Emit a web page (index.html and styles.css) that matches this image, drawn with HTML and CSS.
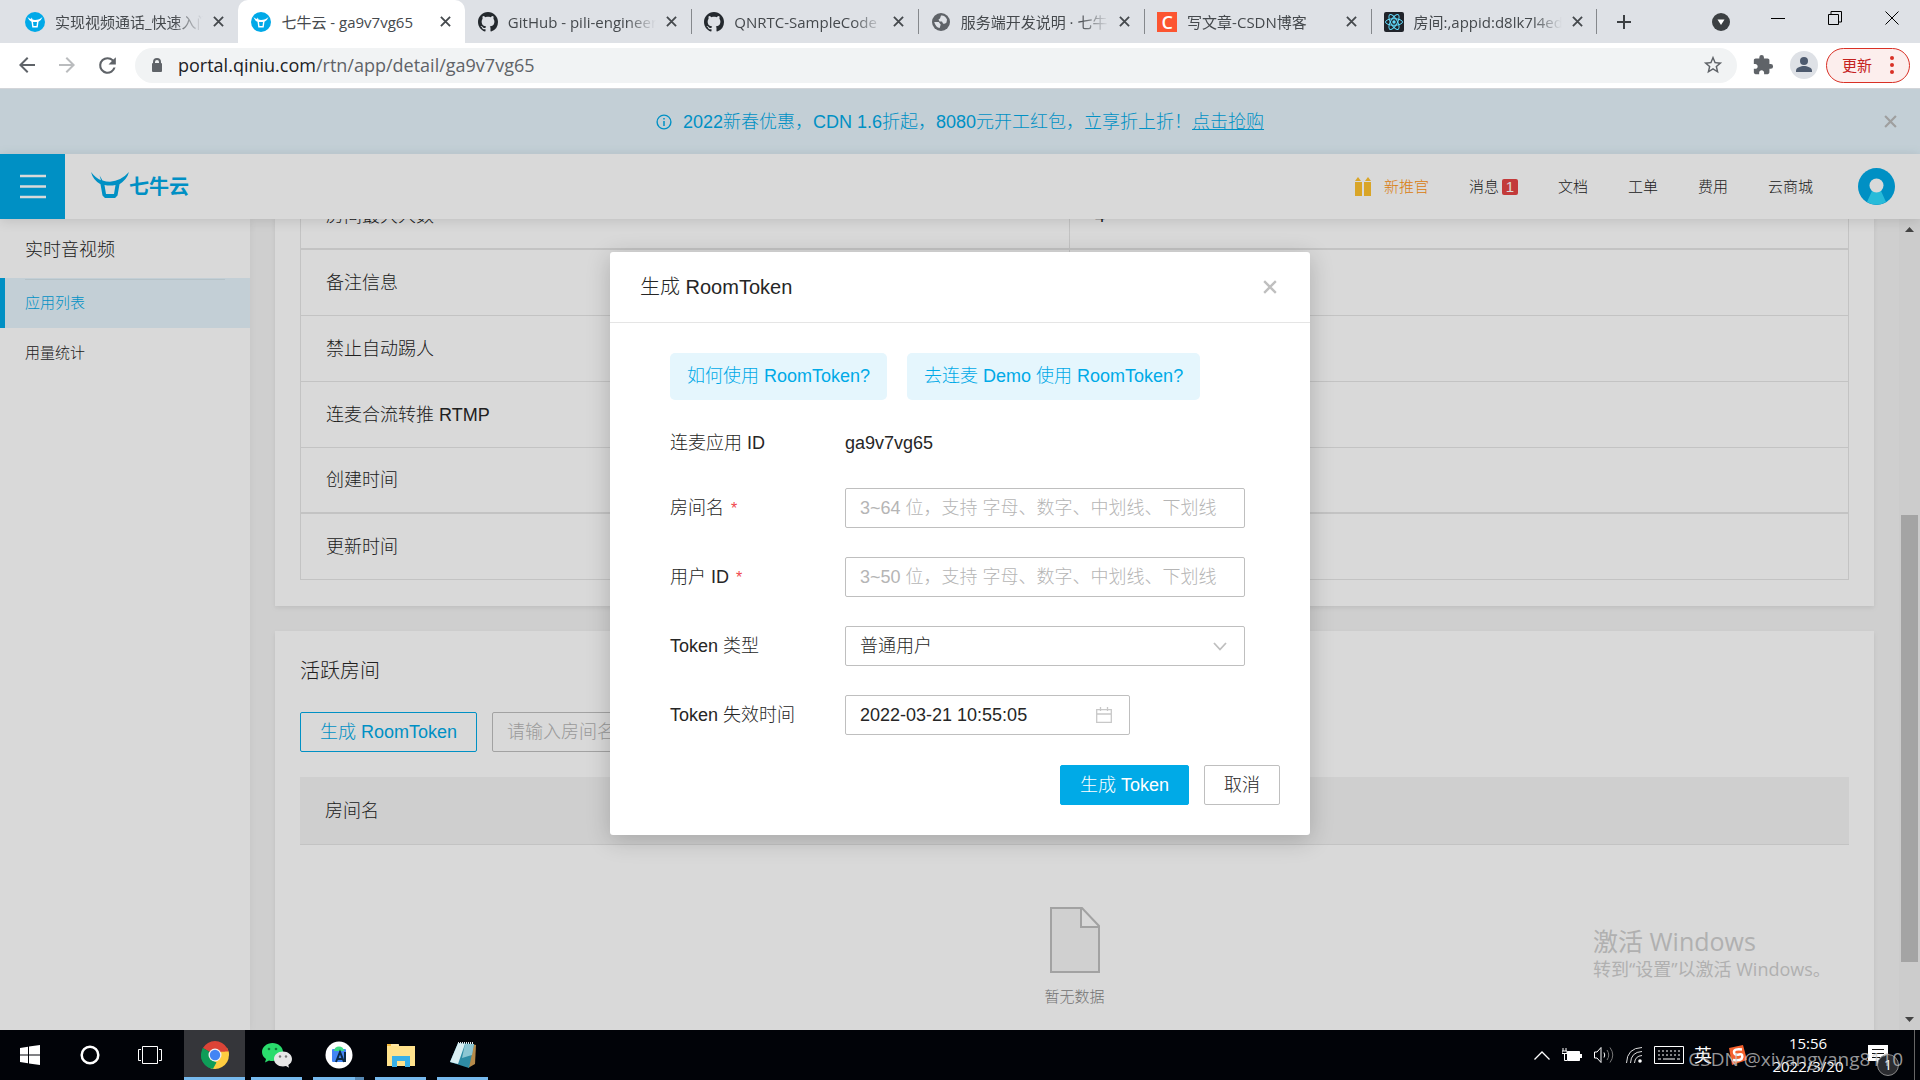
FILE: index.html
```html
<!DOCTYPE html>
<html lang="zh-CN">
<head>
<meta charset="utf-8">
<title>七牛云 - ga9v7vg65</title>
<link rel="stylesheet" href="styles.css">
</head>
<body>
<svg class="defs" aria-hidden="true">
  <symbol id="bull" viewBox="0 0 20 20"><circle cx="10" cy="10" r="10" fill="#00a9e8"/><path d="M2.500 5Q4 9 6.500 9.800L7.300 15.500h5.400l.8-5.700Q16 9 17.500 5 14.500 8 10 8 8.500 8 7.500 7.600L6.800 5.500 6 7Q4 6.500 2.500 5z" fill="#fff"/><path d="M8 10h4l-.5 4h-3z" fill="#00a9e8"/></symbol>
  <symbol id="github" viewBox="0 0 16 16"><path fill="#24292e" d="M8 0C3.580 0 0 3.580 0 8c0 3.540 2.290 6.530 5.470 7.590.4.070.55-.17.55-.38 0-.19-.01-.82-.01-1.490-2.010.37-2.530-.49-2.690-.94-.09-.23-.48-.94-.82-1.130-.28-.15-.68-.52-.01-.53.63-.01 1.080.58 1.230.82.72 1.210 1.870.87 2.330.66.070-.52.28-.87.51-1.070-1.780-.2-3.640-.89-3.640-3.950 0-.87.31-1.590.82-2.150-.08-.2-.36-1.020.08-2.120 0 0 .67-.21 2.200.82.64-.18 1.320-.27 2-.27s1.360.09 2 .27c1.530-1.040 2.200-.82 2.200-.82.44 1.100.16 1.920.08 2.120.51.56.82 1.270.82 2.150 0 3.070-1.870 3.750-3.650 3.950.29.25.54.73.54 1.480 0 1.070-.01 1.930-.01 2.200 0 .21.15.46.55.38A8.010 8.010 0 0 0 16 8c0-4.420-3.580-8-8-8z"/></symbol>
  <symbol id="x" viewBox="0 0 12 12"><path d="M1 1l10 10M11 1L1 11" fill="none" stroke="currentColor" stroke-width="2"/></symbol>
</svg>

<header class="browser">
  <div class="tabstrip">
    <div class="tabs">
      <div class="tab"><svg class="favicon"><use href="#bull"/></svg><span class="tab-title">实现视频通话_快速入门</span><button class="tab-close" aria-label="关闭"><svg width="11" height="11"><use href="#x"/></svg></button></div>
      <div class="tab active"><svg class="favicon"><use href="#bull"/></svg><span class="tab-title">七牛云 - ga9v7vg65</span><button class="tab-close" aria-label="关闭"><svg width="11" height="11"><use href="#x"/></svg></button></div>
      <div class="tab"><svg class="favicon"><use href="#github"/></svg><span class="tab-title">GitHub - pili-engineer</span><button class="tab-close" aria-label="关闭"><svg width="11" height="11"><use href="#x"/></svg></button></div>
      <div class="tab lined"><svg class="favicon"><use href="#github"/></svg><span class="tab-title">QNRTC-SampleCode</span><button class="tab-close" aria-label="关闭"><svg width="11" height="11"><use href="#x"/></svg></button></div>
      <div class="tab lined"><svg class="favicon" viewBox="0 0 20 20"><circle cx="10" cy="10" r="9" fill="#5f6368"/><path d="M10 3.500q4-.5 6 4l-.5 3q-2 2-3.500 1l-1-2H8.500l-1-2 1.500-1zM3.200 10h4.500l2 2.500-1 3.500q-4-.5-5.500-6z" fill="#dee1e6"/></svg><span class="tab-title">服务端开发说明 · 七牛</span><button class="tab-close" aria-label="关闭"><svg width="11" height="11"><use href="#x"/></svg></button></div>
      <div class="tab lined"><span class="favicon csdn">C</span><span class="tab-title">写文章-CSDN博客</span><button class="tab-close" aria-label="关闭"><svg width="11" height="11"><use href="#x"/></svg></button></div>
      <div class="tab lined"><svg class="favicon" viewBox="0 0 20 20"><rect width="20" height="20" rx="2" fill="#20232a"/><g fill="none" stroke="#61dafb"><ellipse cx="10" cy="10" rx="8.500" ry="3.300"/><ellipse cx="10" cy="10" rx="8.500" ry="3.300" transform="rotate(60 10 10)"/><ellipse cx="10" cy="10" rx="8.500" ry="3.300" transform="rotate(120 10 10)"/></g><circle cx="10" cy="10" r="1.700" fill="#61dafb"/></svg><span class="tab-title">房间:,appid:d8lk7l4ed</span><button class="tab-close" aria-label="关闭"><svg width="11" height="11"><use href="#x"/></svg></button></div>
    </div>
    <button class="new-tab" aria-label="新标签页"><svg width="16" height="16" viewBox="0 0 16 16"><path d="M8 1v14M1 8h14" stroke="#3c4043" stroke-width="2"/></svg></button>
    <div class="win-controls">
      <button aria-label="搜索标签页"><svg width="18" height="18" viewBox="0 0 18 18"><circle cx="9" cy="9" r="9" fill="#3c4043"/><path d="M5.500 6.500h7L9 12z" fill="#fff"/></svg></button>
      <button aria-label="最小化"><svg width="14" height="14" viewBox="0 0 14 14"><path d="M0 7.500h14" stroke="#000"/></svg></button>
      <button aria-label="还原"><svg width="14" height="14" viewBox="0 0 14 14"><path d="M.5 3.500h10v10H.5zM3 3V.5h10.500V11H11" fill="none" stroke="#000"/></svg></button>
      <button aria-label="关闭窗口"><svg width="14" height="14" viewBox="0 0 14 14"><path d="M.5.500l13 13M13.500.500l-13 13" stroke="#000"/></svg></button>
    </div>
  </div>
  <div class="toolbar">
    <button aria-label="后退"><svg width="24" height="24" viewBox="0 0 24 24"><path fill="#5f6368" d="M20 11H7.830l5.590-5.590L12 4l-8 8 8 8 1.410-1.410L7.830 13H20v-2z"/></svg></button>
    <button aria-label="前进"><svg width="24" height="24" viewBox="0 0 24 24"><path fill="#babcbe" d="M12 4l-1.410 1.410L16.170 11H4v2h12.170l-5.580 5.590L12 20l8-8z"/></svg></button>
    <button aria-label="刷新"><svg width="25" height="25" viewBox="0 0 24 24"><path fill="#5f6368" d="M17.650 6.350A7.960 7.960 0 0 0 12 4a8 8 0 1 0 7.730 10h-2.080A6 6 0 1 1 12 6c1.660 0 3.140.69 4.220 1.780L13 11h7V4l-2.350 2.350z"/></svg></button>
    <div class="omnibox">
      <svg width="12" height="15" viewBox="0 0 12 15"><path d="M3 6V4a3 3 0 0 1 6 0v2" fill="none" stroke="#5f6368" stroke-width="2"/><rect x="1" y="5" width="10" height="9" rx="1" fill="#5f6368"/></svg>
      <span class="url"><b>portal.qiniu.com</b>/rtn/app/detail/ga9v7vg65</span>
      <svg width="22" height="22" viewBox="0 0 24 24"><path fill="#5f6368" d="M22 9.240l-7.190-.62L12 2 9.190 8.630 2 9.240l5.460 4.730L5.820 21 12 17.270 18.180 21l-1.630-7.030L22 9.240zM12 15.400l-3.760 2.270 1-4.280-3.320-2.880 4.380-.38L12 6.100l1.710 4.040 4.380.38-3.320 2.880 1 4.280L12 15.400z"/></svg>
    </div>
    <svg width="22" height="22" viewBox="0 0 24 24"><path fill="#5f6368" d="M20.500 11H19V7c0-1.100-.9-2-2-2h-4V3.500a2.500 2.500 0 0 0-5 0V5H4c-1.100 0-2 .9-2 2v3.800h1.500c1.500 0 2.700 1.200 2.700 2.700s-1.200 2.700-2.700 2.700H2V20c0 1.100.9 2 2 2h3.800v-1.500c0-1.500 1.200-2.700 2.700-2.700s2.700 1.200 2.700 2.700V22H17c1.100 0 2-.9 2-2v-4h1.500a2.500 2.500 0 0 0 0-5z"/></svg>
    <svg width="28" height="28" viewBox="0 0 28 28"><circle cx="14" cy="14" r="14" fill="#dee1e6"/><circle cx="14" cy="10" r="4" fill="#4d5a6e"/><path d="M6 21v-1.500c0-3 5-4.500 8-4.500s8 1.500 8 4.500V21z" fill="#4d5a6e"/></svg>
    <button class="update">更新<svg width="4" height="18" viewBox="0 0 4 18"><g fill="#d93025"><circle cx="2" cy="2" r="2"/><circle cx="2" cy="9" r="2"/><circle cx="2" cy="16" r="2"/></g></svg></button>
  </div>
</header>

<div class="page">
  <div class="banner">
    <svg width="16" height="16" viewBox="0 0 16 16"><circle cx="8" cy="8" r="6.900" fill="none" stroke="#00aae7" stroke-width="1.400"/><path d="M8 7v5M8 4v1.600" stroke="#00aae7" stroke-width="1.500"/></svg>
    <span>2022新春优惠，CDN 1.6折起，8080元开工红包，立享折上折！<a href="#">点击抢购</a></span>
    <button class="banner-close" aria-label="关闭"><svg width="13" height="13"><use href="#x"/></svg></button>
  </div>

  <div class="topbar">
    <button class="menu" aria-label="菜单"><svg width="26" height="25" viewBox="0 0 26 25"><path d="M0 2h26M0 12.500h26M0 23h26" stroke="#fff" stroke-width="2.500"/></svg></button>
    <a class="logo" href="#"><svg width="38" height="26" viewBox="0 0 38 32" preserveAspectRatio="none"><path d="M0 0Q5 8 10 10L8.500 4l3 6.500Q15 12 19 12 30 11 38 0q-2 9-9.500 15l-2 14-2.500 3h-10l-2.500-3-2-14Q2 10 0 0z" fill="#00aae7"/><path d="M13.500 16q5.500 1.500 11 0L23 27h-8z" fill="#fff"/></svg><span>七牛云</span></a>
    <nav class="topnav">
      <a class="promo" href="#"><svg width="16" height="19" viewBox="0 0 16 19"><path d="M0 5h7v14H0zM9 5h7v14H9zM0 4l3-4 3 4zM10 4l3-4 3 4z" fill="#ffc22e"/></svg>新推官</a>
      <a href="#">消息<i class="badge">1</i></a>
      <a href="#">文档</a>
      <a href="#">工单</a>
      <a href="#">费用</a>
      <a href="#">云商城</a>
      <svg class="avatar" width="37" height="37" viewBox="0 0 37 37"><circle cx="18.500" cy="18.500" r="18.500" fill="#00aae7"/><path d="M14 23h9l5 11q-9.500 5.500-19 0z" fill="#30dcff"/><circle cx="18.500" cy="17.500" r="7" fill="#fff"/></svg>
    </nav>
  </div>

  <div class="workspace">
    <aside class="sidebar">
      <h2>实时音视频</h2>
      <a class="current" href="#">应用列表</a>
      <a href="#">用量统计</a>
    </aside>
    <main class="content">
      <section class="card details">
        <table>
          <tr class="thick"><td>房间最大人数</td><td>4</td></tr>
          <tr><td>备注信息</td><td></td></tr>
          <tr><td>禁止自动踢人</td><td></td></tr>
          <tr><td>连麦合流转推 RTMP</td><td></td></tr>
          <tr class="thick"><td>创建时间</td><td></td></tr>
          <tr><td>更新时间</td><td></td></tr>
        </table>
      </section>
      <section class="card rooms">
        <h3>活跃房间</h3>
        <div class="actions">
          <button class="btn outline">生成 RoomToken</button>
          <input class="field" type="text" placeholder="请输入房间名" aria-label="请输入房间名">
        </div>
        <table class="room-table">
          <thead><tr><th>房间名</th></tr></thead>
        </table>
        <div class="empty">
          <svg width="50" height="66" viewBox="0 0 50 66"><path d="M1 1h31l17 18v46H1z" fill="#f5f5f5"/><path d="M31 1l18 18H31z" fill="#fff"/><path d="M1 1h31l17 18v46H1zM31 1v19h18" fill="none" stroke="#bfbfbf" stroke-width="2"/></svg>
          <p>暂无数据</p>
        </div>
      </section>
    </main>
    <div class="scrollbar">
      <svg width="9" height="5" viewBox="0 0 9 5"><path d="M0 5l4.500-5L9 5z" fill="#505050"/></svg>
      <div class="thumb-track"><div class="thumb"></div></div>
      <svg width="9" height="5" viewBox="0 0 9 5"><path d="M0 0l4.500 5L9 0z" fill="#505050"/></svg>
    </div>
  </div>

  <div class="mask">
    <form class="modal" role="dialog" aria-labelledby="modal-title">
      <div class="modal-head">
        <h1 id="modal-title">生成 RoomToken</h1>
        <button type="button" class="modal-close" aria-label="关闭"><svg width="14" height="14"><use href="#x"/></svg></button>
      </div>
      <div class="modal-body">
        <div class="hints"><a href="#">如何使用 RoomToken?</a><a href="#">去连麦 Demo 使用 RoomToken?</a></div>
        <div class="row plain"><span>连麦应用 ID</span><output>ga9v7vg65</output></div>
        <div class="row"><label for="room">房间名 <em>*</em></label><input id="room" class="field" type="text" placeholder="3~64 位，支持 字母、数字、中划线、下划线"></div>
        <div class="row"><label for="user">用户 ID <em>*</em></label><input id="user" class="field" type="text" placeholder="3~50 位，支持 字母、数字、中划线、下划线"></div>
        <div class="row"><label for="type">Token 类型</label><span class="with-icon"><select id="type" class="field"><option>普通用户</option></select><svg width="14" height="9" viewBox="0 0 14 9"><path d="M1 1l6 6.500L13 1" fill="none" stroke="#bfbfbf" stroke-width="1.800"/></svg></span></div>
        <div class="row"><label for="expire">Token 失效时间</label><span class="with-icon short"><input id="expire" class="field" type="text" value="2022-03-21 10:55:05"><svg width="16" height="16" viewBox="0 0 16 16"><path d="M.7 2.700h14.600v12.600H.7zM.7 7h14.600M4.500 0v4M11.500 0v4" fill="none" stroke="#c8c8c8" stroke-width="1.300"/></svg></span></div>
      </div>
      <div class="modal-foot"><button type="button" class="btn primary">生成 Token</button><button type="button" class="btn">取消</button></div>
    </form>
  </div>
  <div class="activate"><p>激活 Windows</p><p>转到“设置”以激活 Windows。</p></div>
</div>

<footer class="taskbar">
  <button aria-label="开始"><svg width="20" height="20" viewBox="0 0 20 20"><path fill="#fff" d="M0 3l8-1.200V9.500H0zM9 1.600L20 0v9.500H9zM0 10.500h8v7.700L0 17zM9 10.500h11V20L9 18.400z"/></svg></button>
  <button aria-label="Cortana"><svg width="20" height="20" viewBox="0 0 20 20"><circle cx="10" cy="10" r="8.300" fill="none" stroke="#fff" stroke-width="2.500"/></svg></button>
  <button aria-label="任务视图"><svg width="24" height="18" viewBox="0 0 24 18"><path d="M4.500.500h15v17h-15zM3 3.500H.5v11H3M21 3.500h2.500v11H21" fill="none" stroke="#fff"/></svg></button>
  <div class="apps">
    <button class="app focused" aria-label="Chrome"><svg width="28" height="28" viewBox="0 0 28 28"><path d="M14 14L1.900 7A14 14 0 0 1 26.100 7z" fill="#db4437"/><path d="M14 14V28A14 14 0 0 1 1.900 7z" fill="#0f9d58"/><path d="M14 14l12.100-7A14 14 0 0 1 14 28z" fill="#ffcd40"/><path d="M14 7h12.100L20 17z" fill="#db4437"/><path d="M20 10.500h7.500q.5 2 .5 3.500l-8 4z" fill="#ffcd40"/><path d="M14 7.600h12.500l1 3H14z" fill="#db4437"/><path d="M20 17.500L14 28q-3 0-5-1l5-8z" fill="#ffcd40"/><path d="M8 17.500L1.900 7 0 14a14 14 0 0 0 12 13.800l3.500-6.300z" fill="#0f9d58"/><circle cx="14" cy="14" r="6.500" fill="#f1f1f1"/><circle cx="14" cy="14" r="5.200" fill="#4285f4"/></svg></button>
    <button class="app" aria-label="微信"><svg width="30" height="26" viewBox="0 0 30 26"><path d="M10.500 1C4.700 1 0 5 0 10c0 3 1.500 5.300 4 7l-1 3.500 4-2q1.500.5 3.500.5C16.300 19 21 15 21 10s-4.700-9-10.500-9z" fill="#2adc6c"/><circle cx="7" cy="7" r="1.300" fill="#12783a"/><circle cx="14" cy="7" r="1.300" fill="#12783a"/><path d="M21 9.500c-5 0-9 3.300-9 7.500s4 7.500 9 7.500q1.500 0 3-.4l3 1.600-.7-2.700C28.700 21.500 30 19.500 30 17c0-4.200-4-7.500-9-7.500z" fill="#e6e6e6"/><circle cx="18" cy="14.500" r="1.200" fill="#777"/><circle cx="24" cy="14.500" r="1.200" fill="#777"/></svg></button>
    <button class="app multi" aria-label="Android Studio"><svg width="28" height="28" viewBox="0 0 28 28"><circle cx="14" cy="14" r="13.500" fill="#fff"/><rect x="7" y="8" width="14" height="13" rx="1" fill="#4285f4"/><path d="M9 10a5 4.500 0 0 1 10 0z" fill="#3ddc84"/><path d="M11 21l4-10 4 10M12.500 18h5M20 11v10" fill="none" stroke="#0b2a45" stroke-width="2"/></svg></button>
    <button class="app" aria-label="文件资源管理器"><svg width="28" height="24" viewBox="0 0 28 24"><path d="M0 1h11l2 3H0z" fill="#f5b93b"/><path d="M0 3h28v20H0z" fill="#ffe28c"/><path d="M5 24V13h18v11h-5v-6h-8v6z" fill="#38b0e8"/><path d="M4 2h8" stroke="#fff6c8" stroke-width="1.500"/></svg></button>
    <button class="app" aria-label="记事本"><svg width="28" height="28" viewBox="0 0 28 28"><path d="M23 3l4 1-1 19-7 4z" fill="#b58a4a"/><path d="M9 2l16 1-5 24-19-6z" fill="#2f8ca5"/><path d="M9 2l7 1-7 20-8-2z" fill="#d9eff3"/><path d="M16 3l9 0-2 11-10 3z" fill="#8cc6d3"/><path d="M9 2h16" stroke="#dfe8ea" stroke-width="2" stroke-dasharray="1 1"/></svg></button>
  </div>
  <div class="tray">
    <svg width="16" height="9" viewBox="0 0 16 9"><path d="M.5 8.500L8 1l7.500 7.500" fill="none" stroke="#fff" stroke-width="1.300"/></svg>
    <svg width="20" height="14" viewBox="0 0 20 14"><path d="M5.500 3.500h12v9h-12z" fill="#fff" stroke="#fff"/><path d="M18 6h2v4h-2z" fill="#fff"/><path d="M1 0v3M4 0v3M0 3h5v2.500H0zM2.500 6v6.500H5" fill="none" stroke="#fff"/></svg>
    <svg width="20" height="18" viewBox="0 0 20 18"><path d="M.5 6h2.500l4-4.500v15L3 12H.5zM10 6.500q1.500 2.500 0 5" fill="none" stroke="#fff"/><path d="M13 4q3.500 5 0 10M16 1.500q5.500 7.500 0 15" fill="none" stroke="#777"/></svg>
    <svg width="16" height="16" viewBox="0 0 16 16"><path d="M.5 16Q1 1 16 .500M4.500 16Q5 5 16 4.500M8.500 16Q9 9 16 8.500" fill="none" stroke="#ddd"/><circle cx="14" cy="14" r="1.800" fill="#fff"/></svg>
    <svg width="30" height="18" viewBox="0 0 30 18"><path d="M.5.500h29v17H.5z" fill="none" stroke="#fff"/><path d="M4 5h22M4 9h22" stroke="#fff" stroke-dasharray="2 2"/><path d="M4 13h3M9 13h12M23 13h3" stroke="#fff"/></svg>
    <span class="ime">英</span>
    <svg width="20" height="20" viewBox="0 0 20 20"><path d="M2 3l14-3 4 15-15 5z" fill="#f4602c"/><path d="M15 4.500Q7 3.500 7 7t5 2.500 2.500 4.500Q12 16 6 15" fill="none" stroke="#fff" stroke-width="2.500"/></svg>
    <time><span>15:56</span><span>2022/3/20</span></time>
    <span class="notice"><svg width="20" height="20" viewBox="0 0 20 20"><path d="M0 0h20v16h-7l-4 4v-4H0z" fill="#fff"/><path d="M4 4.500h12M4 8.500h12M4 12.500h8" stroke="#111"/></svg><i>1</i></span>
    <span class="stamp">CSDN @xiyangyang8110</span>
  </div>
</footer>
</body>
</html>
```
FILE: styles.css
```css
* { box-sizing: border-box; }

body {
  margin: 0;
  height: 100vh;
  display: flex;
  flex-direction: column;
  overflow: hidden;
  font: 300 18px/24px "Liberation Sans", "Noto Sans CJK SC", sans-serif;
  color: #262626;
}

h1, h2, h3, p { margin: 0; font-weight: 300; }
a { color: inherit; text-decoration: none; }
button { font: inherit; color: inherit; border: 0; background: none; padding: 0; }
input, select { font: inherit; color: inherit; }
svg { display: block; flex: none; }
.defs { position: absolute; width: 0; height: 0; }

/* browser frame */
.browser { flex: none; font-family: "Open Sans", "Noto Sans CJK SC", sans-serif; font-weight: 400; }
.tabstrip { display: flex; height: 43px; background: #dee1e6; padding-left: 12px; }
.tabs { display: flex; flex: 0 1 1585px; min-width: 0; }
.tab {
  flex: 1 1 0;
  min-width: 0;
  display: flex;
  align-items: center;
  gap: 10px;
  padding: 0 14px 0 13px;
  font-size: 15px;
  color: #45494d;
}
.tab.active { background: #fff; border-radius: 10px 10px 0 0; }
.tab.lined { background: linear-gradient(#85888c, #85888c) 0 9px / 1px 25px no-repeat; }
.tab:last-child { background: linear-gradient(#85888c, #85888c) 0 9px / 1px 25px no-repeat, linear-gradient(#85888c, #85888c) 100% 9px / 1px 25px no-repeat; }
.favicon { width: 20px; height: 20px; flex: none; }
.csdn { background: #fc5531; color: #fff; font-weight: 600; font-size: 18px; line-height: 20px; text-align: center; }
.tab-title {
  flex: 1;
  overflow: hidden;
  white-space: nowrap;
  -webkit-mask-image: linear-gradient(90deg, #000 80%, transparent);
  mask-image: linear-gradient(90deg, #000 80%, transparent);
}
.tab.active .tab-title { -webkit-mask-image: none; mask-image: none; }
.new-tab { padding: 0 19px; }
.win-controls { display: flex; margin-left: auto; }
.win-controls button { width: 57px; height: 36px; display: flex; align-items: center; justify-content: center; }
.win-controls button:first-child { height: 43px; }

.toolbar { display: flex; align-items: center; height: 46px; padding: 0 10px 1px 15px; gap: 16px; border-bottom: 1px solid #d3d5d9; background: #fff; }
.omnibox { flex: 1; display: flex; align-items: center; gap: 15px; height: 35px; margin-right: -1px; margin-left: -1px; padding: 0 13px 0 16px; border-radius: 18px; background: #f1f3f4; }
.toolbar > svg:last-of-type { margin-right: -8px; }
.url { flex: 1; color: #5f6368; }
.url b { font-weight: 400; color: #202124; }
.update { display: flex; align-items: center; justify-content: space-between; width: 84px; height: 35px; padding: 0 15px; border: 1px solid #d93025; border-radius: 18px; background: #fceeed; color: #c5221f; font-size: 15px; }

/* console page */
.page { position: relative; flex: 1; min-height: 0; display: flex; flex-direction: column; overflow: hidden; }
.banner { flex: none; display: flex; align-items: center; justify-content: center; gap: 11px; height: 65px; background: #e5f4fc; color: #00aae7; position: relative; }
.banner a { text-decoration: underline; }
.banner-close { position: absolute; right: 23px; color: #bbb; }

.topbar { flex: none; display: flex; align-items: center; height: 65px; background: #fff; box-shadow: 0 2px 12px rgba(0, 0, 0, .12); z-index: 1; }
.menu { width: 65px; height: 65px; display: flex; align-items: center; justify-content: center; background: #00aae7; }
.logo { display: flex; align-items: center; margin-left: 26px; color: #00aae7; font-size: 20px; font-weight: 700; }
.logo svg { margin-bottom: 4px; }
.topnav { margin-left: auto; display: flex; align-items: center; gap: 40px; padding-right: 25px; font-size: 15px; }
.topnav a { display: flex; align-items: center; }
.topnav .promo { gap: 13px; color: #ff9410; }
.badge { width: 16px; height: 16px; margin-left: 3px; border-radius: 2px; background: #e54545; color: #fff; font-style: normal; line-height: 16px; text-align: center; }
.avatar { margin-left: 5px; }

.workspace { flex: 1; min-height: 0; display: flex; background: #f4f4f4; }
.sidebar { flex: 0 0 250px; background: #fff; font-size: 15px; box-shadow: 0 0 8px rgba(0, 0, 0, .06); }
.sidebar h2 { padding: 19px 25px 16px; font-size: 18px; }
.sidebar a { display: flex; align-items: center; height: 50px; padding-left: 25px; }
.sidebar .current { padding-left: 20px; border-left: 5px solid #00aae7; background: linear-gradient(#d5e4ec, #d5e4ec) 20px 1px / 200px 1px no-repeat, #e5f4fc; color: #00aae7; }

.content { flex: 1; min-width: 0; padding: 0 25px; overflow: hidden; }
.card { background: #fff; padding: 25px; box-shadow: 0 2px 5px rgba(0, 0, 0, .08); }
.card table { width: 100%; border-spacing: 0; }
.details { margin-top: -60px; margin-bottom: 25px; padding-bottom: 26px; }
.details table { border: 1px solid #e5e5e5; border-width: 0 1px; table-layout: fixed; }
.details td { height: 66px; padding: 0 25px; border-bottom: 1px solid #e5e5e5; }
.details td:first-child { width: 769px; border-right: 1px solid #e5e5e5; }
.details .thick td { border-bottom-width: 2px; }
.rooms { height: 100%; }
.rooms h3 { font-size: 20px; line-height: 30px; }
.actions { display: flex; gap: 15px; margin: 26px 0 25px; }
.room-table th { height: 68px; padding: 0 25px; border-bottom: 1px solid #e5e5e5; background: #f4f4f4; font-weight: 300; text-align: left; }
.empty { display: flex; flex-direction: column; align-items: center; gap: 12px; padding-top: 62px; font-size: 15px; color: #888; }

.btn { height: 40px; padding: 0 19px; border: 1px solid #bfbfbf; border-radius: 2px; background: #fff; white-space: nowrap; }
.btn.outline { border-color: #00aae7; color: #00aae7; }
.btn.primary { border-color: #00aae7; background: #00aae7; color: #fff; }
.field { width: 400px; height: 40px; padding: 0 14px; border: 1px solid #bfbfbf; border-radius: 2px; background: #fff; outline: 0; appearance: none; }
.field::placeholder { color: #b5b5b5; opacity: 1; }

.scrollbar { flex: 0 0 21px; display: flex; flex-direction: column; align-items: center; padding: 8px 0; background: #f0f0f0; }
.thumb-track { flex: 1; align-self: stretch; padding: 0 2px; }
.thumb { height: 57%; margin-top: 283px; background: #c1c1c1; }

/* dialog */
.mask { position: absolute; inset: 0; z-index: 2; display: flex; justify-content: center; align-items: flex-start; padding-top: 163px; background: rgba(0, 0, 0, .15); }
.modal { width: 700px; border-radius: 3px; background: #fff; box-shadow: 0 5px 25px rgba(0, 0, 0, .2); }
.modal-head { display: flex; align-items: center; justify-content: space-between; height: 71px; padding: 0 33px 0 30px; border-bottom: 1px solid #e5e5e5; }
.modal-head h1 { font-size: 20px; }
.modal-close { color: #bfbfbf; }
.modal-body { display: flex; flex-direction: column; gap: 30px; padding: 30px 60px 31px; }
.hints { display: flex; gap: 20px; margin-bottom: -3px; color: #00aae7; }
.hints a { height: 47px; padding: 0 17px; border-radius: 5px; background: #e5f6fd; line-height: 46px; }
.row { display: grid; grid-template-columns: 175px 400px; align-items: center; height: 39px; }
.row.plain { height: 31px; }
.row em { padding-left: 2px; color: #f0474d; font-style: normal; font-size: 16px; }
.with-icon { position: relative; display: flex; align-items: center; }
.with-icon .field { width: 100%; }
.with-icon svg { position: absolute; right: 18px; pointer-events: none; }
.short { width: 285px; }
.modal-foot { display: flex; justify-content: flex-end; gap: 15px; padding: 0 30px 30px; }

.activate { position: absolute; right: 93px; bottom: 47px; z-index: 3; width: 234px; color: #b0b0b0; font: 18px/28px "Open Sans", "Noto Sans CJK SC", sans-serif; white-space: nowrap; }
.activate p { font-weight: 400; }
.activate p:first-child { font-size: 25px; }

/* Windows taskbar */
.taskbar { flex: none; display: flex; height: 50px; background: #010308; color: #fff; font-family: "Open Sans", "Noto Sans CJK SC", sans-serif; font-weight: 400; }
.taskbar button { display: flex; align-items: center; justify-content: center; width: 60px; }
.taskbar .apps { display: flex; gap: 11px; margin-left: 4px; }
.taskbar .app { width: 51px; border-bottom: 3px solid #76b9ed; padding-top: 3px; }
.taskbar .focused { width: 61px; margin-right: -5px; background: #35363a; }
.taskbar .multi { border-image: linear-gradient(90deg, #76b9ed 78%, #5689b4 78%) 3; }
.tray { position: relative; display: flex; align-items: center; gap: 13px; margin-left: auto; padding-right: 5px; font-size: 15px; }
.tray svg { margin-left: -1px; }
.ime { font-size: 18px; margin: 0 3px 0 -3px; }
.tray time { display: flex; flex-direction: column; align-items: center; width: 96px; line-height: 23px; }
.notice { position: relative; width: 45px; }
.notice i { position: absolute; left: 8px; top: 9px; width: 22px; height: 22px; border: 1px solid #888; border-radius: 50%; background: #2b2c30; font-size: 14px; font-style: normal; line-height: 20px; text-align: center; }
.tray::after { content: ""; width: 1px; height: 50px; margin-left: -13px; background: #666; }
.stamp { position: absolute; right: 17px; top: 17px; color: rgba(200, 200, 200, .75); font: 19px/24px "Open Sans", sans-serif; white-space: nowrap; }
```
